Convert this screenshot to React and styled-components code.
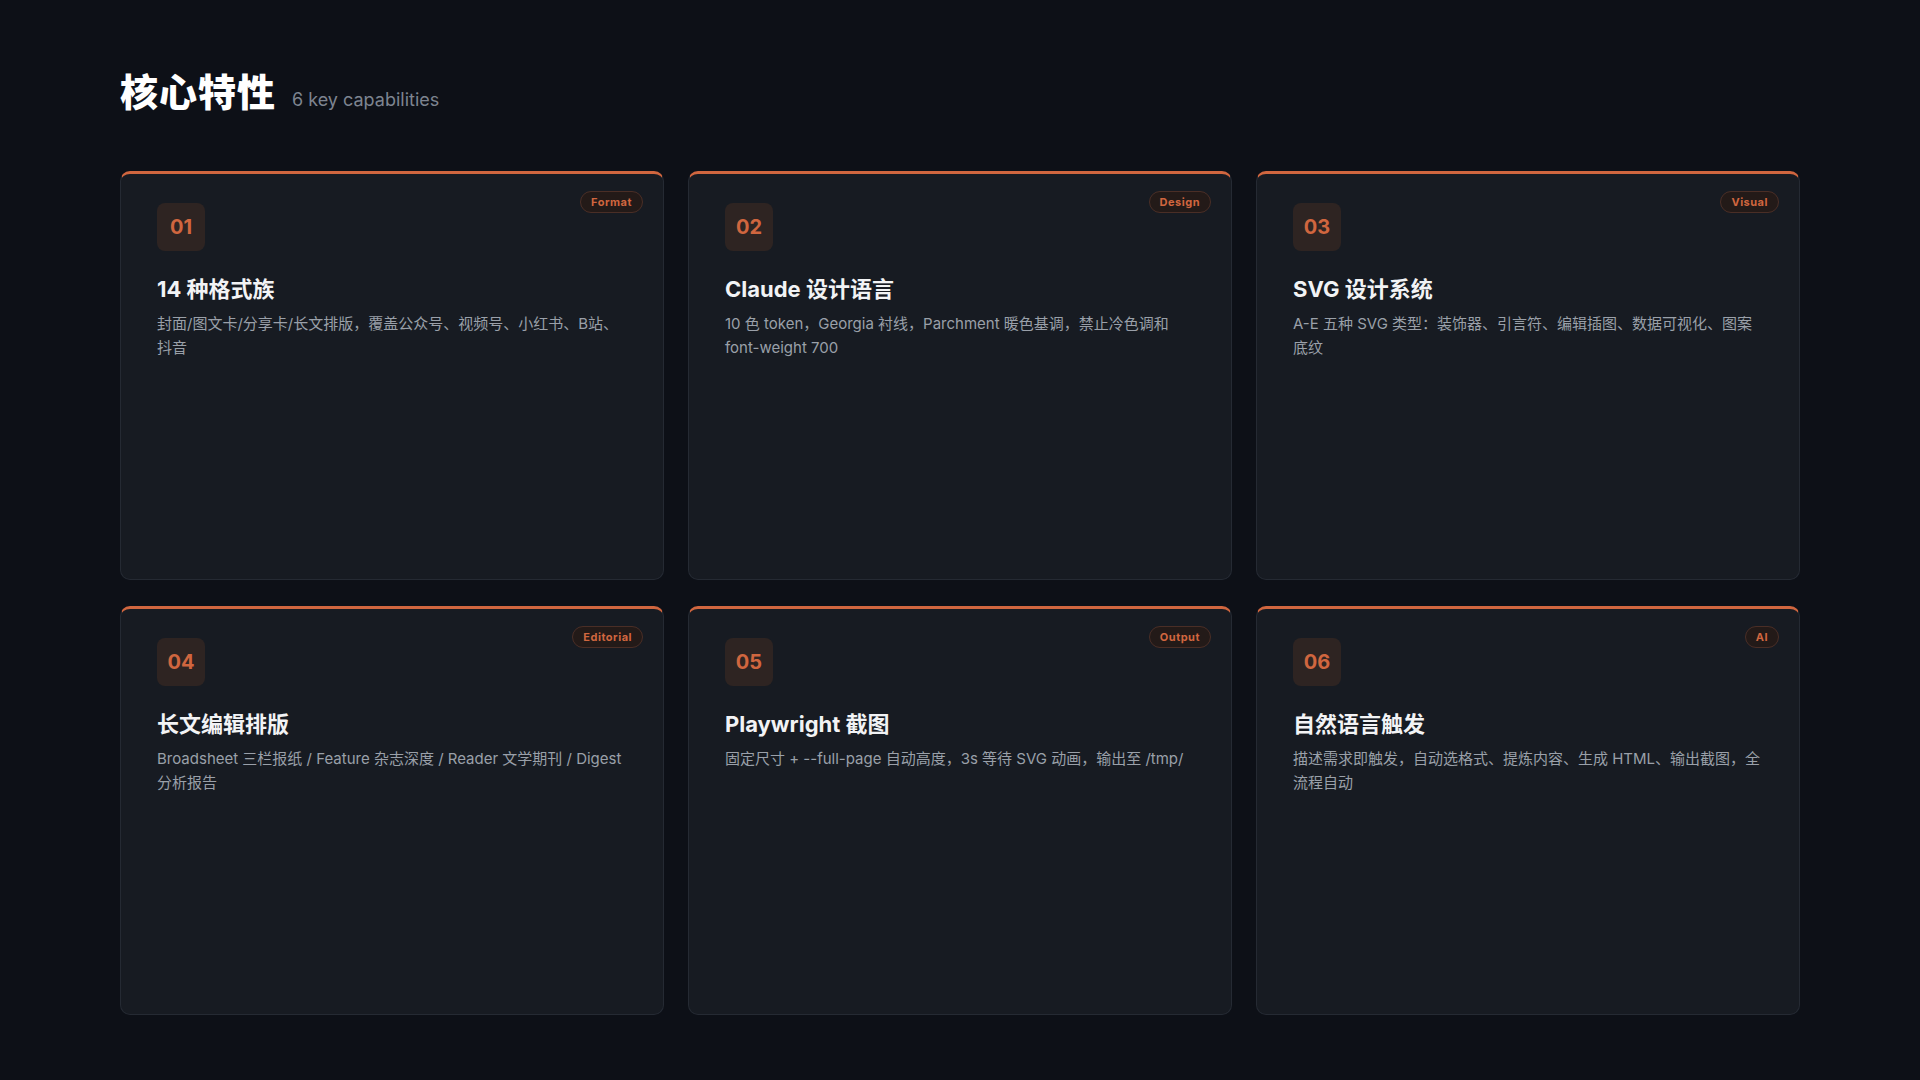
import React from "react";
import styled, { createGlobalStyle } from "styled-components";

const G = createGlobalStyle`
  html,body{margin:0;background:#0d1017;}
  body{font-family:Inter,"Noto Sans CJK SC",sans-serif;}
`;
const Page = styled.div`
  width:1920px;height:1080px;box-sizing:border-box;padding:62px 120px 0;background:#0d1017;
`;
const Head = styled.div`display:flex;align-items:baseline;gap:16px;height:56px;`;
const H1 = styled.h1`margin:0;font-size:38px;font-weight:800;color:#fff;letter-spacing:1px;`;
const Sub = styled.span`font-size:18px;color:#7d8490;`;
const Grid = styled.div`
  margin-top:53px;display:grid;grid-template-columns:repeat(3,544px);grid-auto-rows:409px;column-gap:24px;row-gap:26px;
`;
const Card = styled.div`
  position:relative;box-sizing:border-box;background:#171b22;border:1px solid #252a33;border-top:3px solid #d0663f;
  border-radius:10px;padding:29px 36px;
`;
const Num = styled.div`
  width:48px;height:48px;border-radius:8px;background:#2e2422;color:#d0663f;font-weight:700;font-size:20px;
  display:flex;align-items:center;justify-content:center;
`;
const Tag = styled.span`
  position:absolute;top:17px;right:20px;height:20px;padding:0 10px;border-radius:11px;border:1px solid #4a2e26;
  background:#231a18;color:#d0663f;font-size:11px;font-weight:700;letter-spacing:0.5px;display:flex;align-items:center;
`;
const T = styled.div`margin-top:20px;font-size:22px;font-weight:700;color:#f2f3f5;`;
const D = styled.div`margin-top:9px;font-size:15px;line-height:24px;color:#9aa0a9;`;

const items = [
  ["01","Format","14 种格式族","封面/图文卡/分享卡/长文排版，覆盖公众号、视频号、小红书、B站、抖音"],
  ["02","Design","Claude 设计语言","10 色 token，Georgia 衬线，Parchment 暖色基调，禁止冷色调和 font-weight 700"],
  ["03","Visual","SVG 设计系统","A-E 五种 SVG 类型：装饰器、引言符、编辑插图、数据可视化、图案底纹"],
  ["04","Editorial","长文编辑排版","Broadsheet 三栏报纸 / Feature 杂志深度 / Reader 文学期刊 / Digest 分析报告"],
  ["05","Output","Playwright 截图","固定尺寸 + --full-page 自动高度，3s 等待 SVG 动画，输出至 /tmp/"],
  ["06","AI","自然语言触发","描述需求即触发，自动选格式、提炼内容、生成 HTML、输出截图，全流程自动"],
];

export default function App(){
  return <Page><G/>
    <Head><H1>核心特性</H1><Sub>6 key capabilities</Sub></Head>
    <Grid>{items.map(([n,tag,t,d])=>(
      <Card key={n}><Tag>{tag}</Tag><Num>{n}</Num><T>{t}</T><D>{d}</D></Card>
    ))}</Grid>
  </Page>;
}
